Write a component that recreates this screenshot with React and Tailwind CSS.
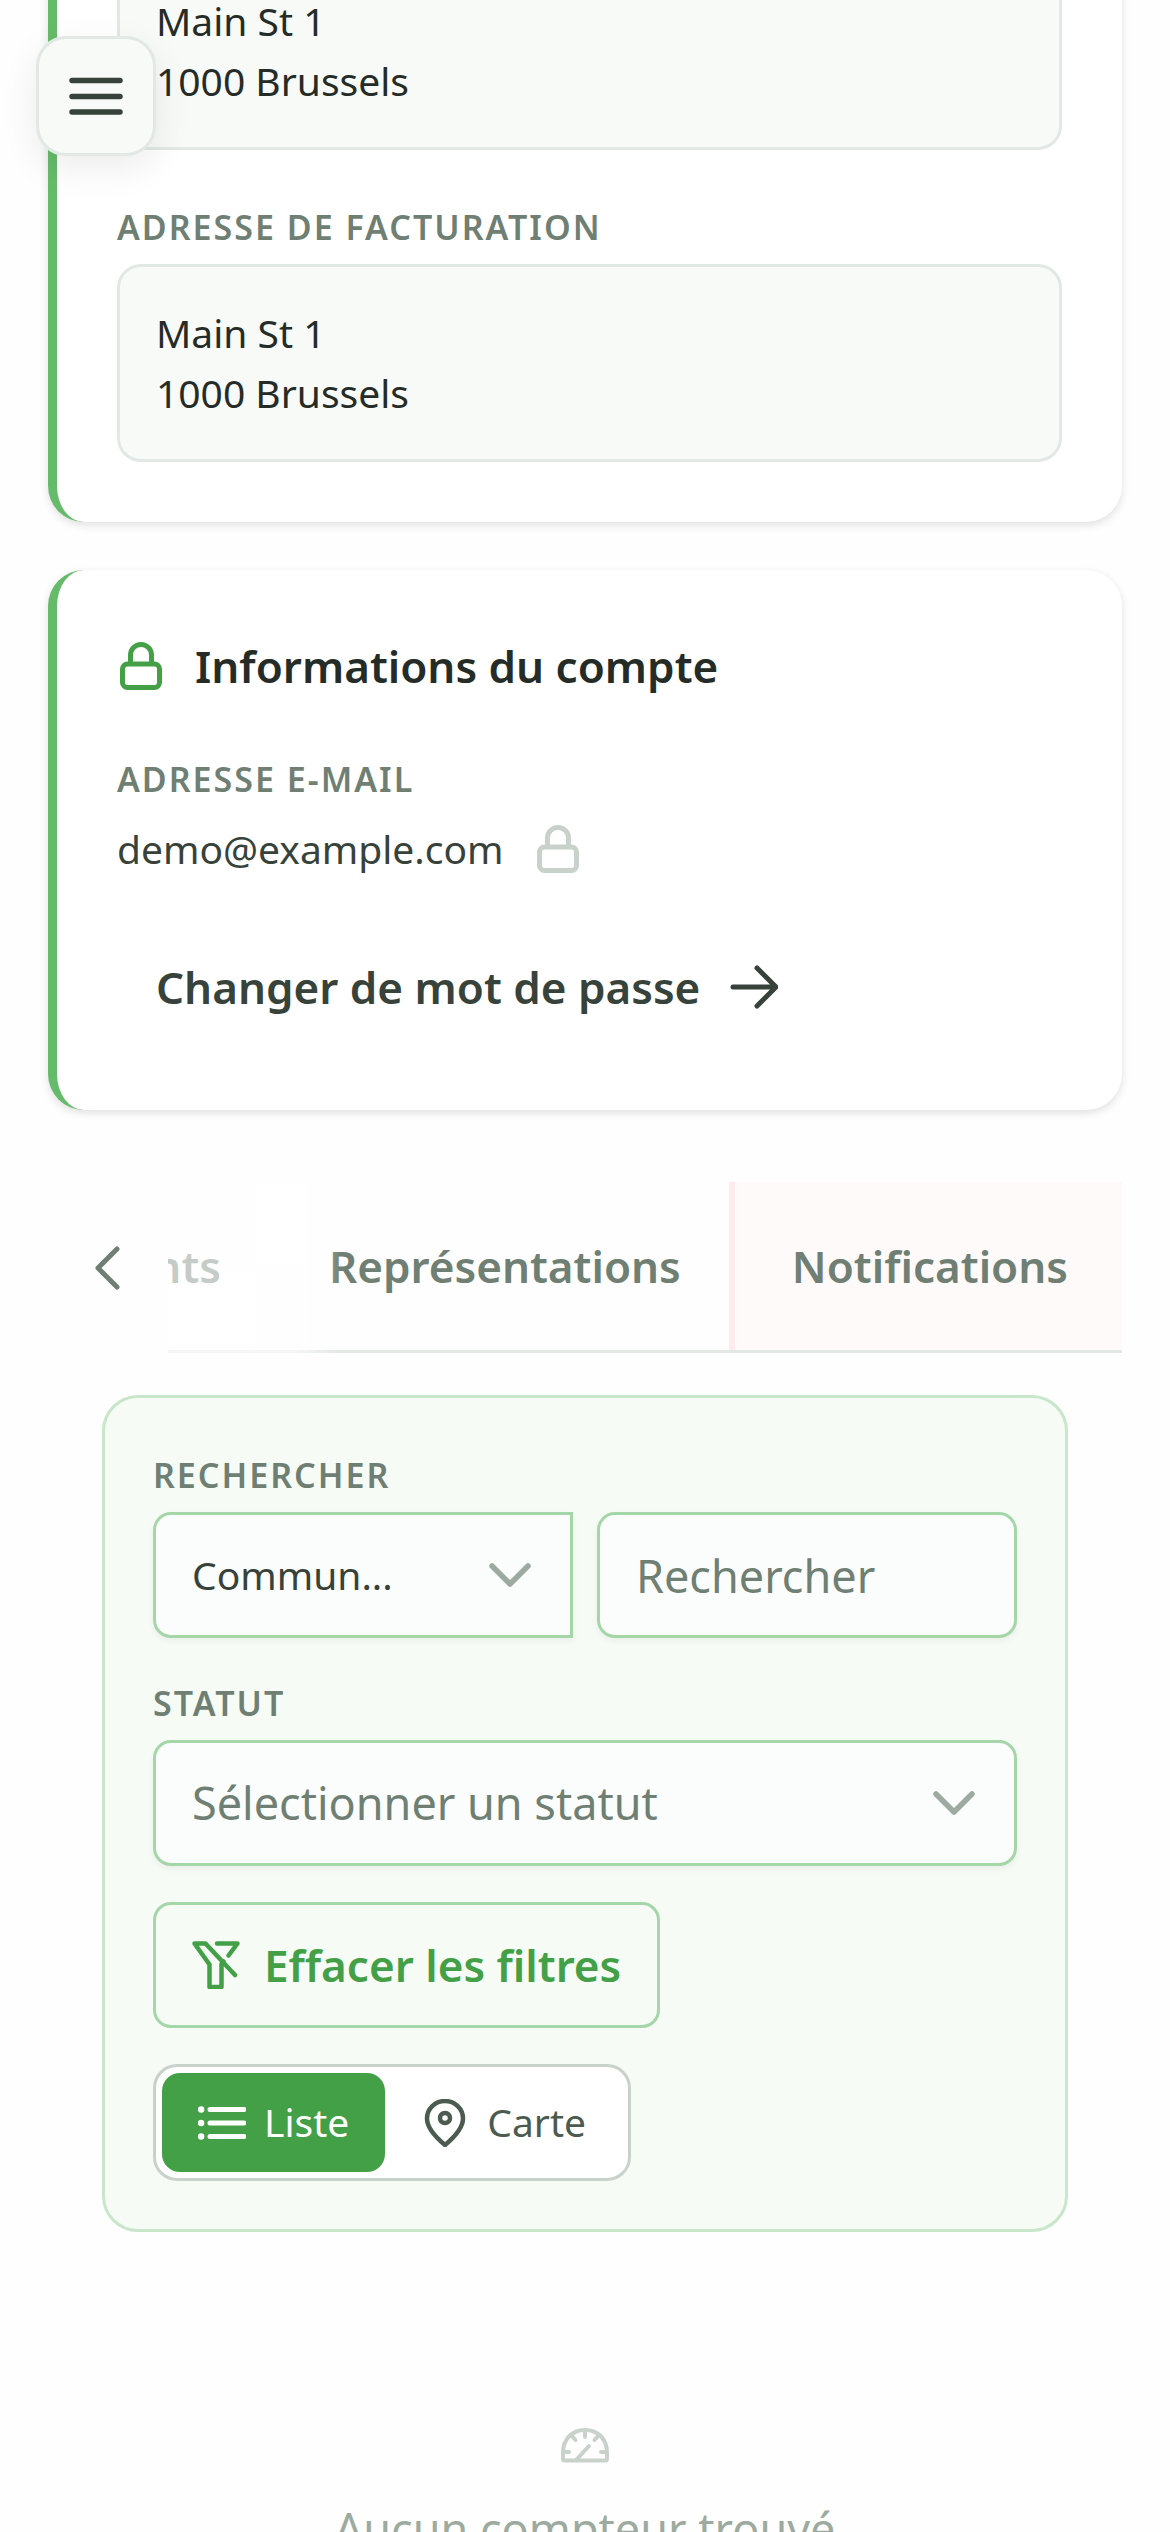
const LockIcon = ({ className }) => (
  <svg className={className} viewBox="0 0 48 48" fill="none" stroke="currentColor" strokeWidth="5" aria-hidden="true">
    <path d="M13.5 22V13a10.5 10.5 0 0 1 21 0v9" />
    <rect x="5.5" y="22" width="37" height="23.5" rx="5" />
  </svg>
);

const ArrowRightIcon = ({ className }) => (
  <svg className={className} viewBox="0 0 48 48" fill="none" stroke="currentColor" strokeWidth="5" strokeLinecap="round" strokeLinejoin="round" aria-hidden="true">
    <path d="M3 24H45M27 5L46 24L27 43" />
  </svg>
);

const ChevronDownIcon = ({ className }) => (
  <svg className={className} viewBox="0 0 48 48" fill="none" stroke="currentColor" strokeWidth="5.5" strokeLinecap="round" strokeLinejoin="round" aria-hidden="true">
    <path d="M6 15L24 33L42 15" />
  </svg>
);

const ChevronLeftIcon = ({ className }) => (
  <svg className={className} viewBox="0 0 48 48" fill="none" stroke="currentColor" strokeWidth="5" strokeLinecap="round" strokeLinejoin="round" aria-hidden="true">
    <path d="M33 5L14 24L33 43" />
  </svg>
);

const BarsIcon = ({ className }) => (
  <svg className={className} viewBox="0 0 54 54" fill="none" stroke="currentColor" strokeWidth="5.5" strokeLinecap="round" aria-hidden="true">
    <path d="M3 11.5H51M3 27.5H51M3 43H51" />
  </svg>
);

const FilterSlashIcon = ({ className }) => (
  <svg className={className} viewBox="0 0 48 48" fill="none" stroke="currentColor" strokeWidth="4.5" strokeLinecap="round" strokeLinejoin="round" aria-hidden="true">
    <path d="M25 2.5H45.5L36.5 14.5" />
    <path d="M43 34L13.5 2.5H2.500L17.5 23.5V46H29.500V23L31.500 20.5" />
  </svg>
);

const ListIcon = ({ className }) => (
  <svg className={className} viewBox="0 0 48 48" fill="none" stroke="currentColor" strokeLinecap="round" aria-hidden="true">
    <path d="M12 10.5H46M12 24H46M12 37.5H46" strokeWidth="5" />
    <path d="M3 10.5H3.1M3 24H3.1M3 37.5H3.1" strokeWidth="6.5" />
  </svg>
);

const PinIcon = ({ className }) => (
  <svg className={className} viewBox="0 0 48 48" fill="none" stroke="currentColor" strokeWidth="4.5" strokeLinejoin="round" aria-hidden="true">
    <path d="M24 46C18 41 6 30 6 19.5a18 17.5 0 0 1 36 0C42 30 30 41 24 46Z" />
    <circle cx="24" cy="19" r="5" />
  </svg>
);

const GaugeIcon = ({ className }) => (
  <svg className={className} viewBox="0 0 48 48" fill="none" stroke="currentColor" strokeWidth="4" strokeLinecap="round" strokeLinejoin="round" aria-hidden="true">
    <path d="M3.5 39.500C2.500 39.500 2 39 2 38V32C2 18 11 9 24 9s22 9 22 23v6c0 1-.5 1.500-1.500 1.500Z" />
    <path d="M24 10v6M10 14l4.500 5M38 14l-4.500 5M3 31h5M45 31h-5M16 38L28 25" />
  </svg>
);

const Label = ({ children, htmlFor }) => {
  const style =
    "block mb-2 text-[34px] leading-[58px] font-semibold tracking-[2px] uppercase text-[#6f7f73]";

  return htmlFor ? (
    <label htmlFor={htmlFor} className={style}>
      {children}
    </label>
  ) : (
    <h3 className={style}>{children}</h3>
  );
};

const Address = ({ street, city }) => (
  <address className="not-italic rounded-3xl border-3 border-[#e2e8e4] bg-[#f8faf8] p-9 text-[39px] leading-[60px] text-[#252c27]">
    <p>{street}</p>
    <p>{city}</p>
  </address>
);

const field =
  "w-full h-[126px] rounded-[18px] border-3 border-[#a5d6a7] bg-[#fbfdfc] px-9 shadow-[0_3px_6px_rgba(18,18,23,0.05)] outline-none";

const App = () => {
  return (
    <div className="h-screen overflow-hidden bg-[#fefefe] px-12 font-['Noto_Sans',sans-serif] text-[#252c27]">
      {/* Floating menu button */}
      <button
        type="button"
        aria-label="Menu"
        className="fixed top-9 left-9 z-10 flex size-30 items-center justify-center rounded-[30px] border-3 border-[#e2e8e4] bg-[#f8faf8] text-[#37423a] shadow-[0_12px_36px_rgba(0,0,0,0.08)]"
      >
        <BarsIcon className="size-[54px]" />
      </button>

      {/* Addresses, scrolled partly out of view */}
      <section className="-mt-12 rounded-b-[36px] border-l-9 border-[#66bb6a] bg-white px-15 pb-15 shadow-[0_3px_9px_rgba(0,0,0,0.12)]">
        <Address street="Main St 1" city="1000 Brussels" />
        <div className="mt-12">
          <Label>Adresse de facturation</Label>
          <Address street="Main St 1" city="1000 Brussels" />
        </div>
      </section>

      {/* Account */}
      <section className="mt-12 rounded-[36px] border-l-9 border-[#66bb6a] bg-white p-15 shadow-[0_3px_9px_rgba(0,0,0,0.12)]">
        <h2 className="mb-12 flex items-center gap-[30px] text-[44px] leading-[72px] font-semibold">
          <LockIcon className="size-12 text-[#43a047]" />
          Informations du compte
        </h2>
        <Label>Adresse e-mail</Label>
        <div className="flex h-[66px] items-center gap-[30px] text-[39px] text-[#37423a]">
          demo@example.com
          <LockIcon className="size-12 text-[#c8d2ca]" />
        </div>
        <button
          type="button"
          className="mt-[42px] flex h-[126px] items-center gap-[30px] px-[39px] text-[44px] font-semibold text-[#37423a]"
        >
          Changer de mot de passe
          <ArrowRightIcon className="size-12" />
        </button>
      </section>

      {/* Tabs */}
      <nav className="relative mt-18 flex h-[171px] text-[44px] font-semibold text-[#6f7f73]">
        <button type="button" aria-label="Précédent" className="flex w-30 shrink-0 items-center pl-9">
          <ChevronLeftIcon className="size-12" />
        </button>
        <div role="tablist" className="flex min-w-0 flex-1 justify-end overflow-hidden border-b-3 border-[#e2e8e4]">
          <button type="button" role="tab" className="shrink-0 px-[54px]">
            Documents
          </button>
          <button type="button" role="tab" className="shrink-0 pr-12 pl-[54px]">
            Représentations
          </button>
          <button type="button" role="tab" className="shrink-0 border-l-6 border-[#ffebee] bg-[#fffafa] pr-[54px] pl-[57px]">
            Notifications
          </button>
        </div>
        {/* Fade over the tabs that scroll under the arrow */}
        <div className="pointer-events-none absolute inset-y-0 left-30 w-[174px] bg-linear-to-r from-white/60 from-75% to-transparent" />
      </nav>

      {/* Filters */}
      <form className="mx-[54px] mt-[42px] rounded-[36px] border-3 border-[#c8e6c9] bg-[#f6fbf6] p-12">
        <Label htmlFor="search">Rechercher</Label>
        <div className="grid grid-cols-2 gap-6">
          <div className="relative">
            <select
              aria-label="Critère de recherche"
              className="h-[126px] w-full appearance-none rounded-l-[18px] border-3 border-[#a5d6a7] bg-[#fbfdfc] px-9 text-[39px] text-[#37423a] shadow-[0_3px_6px_rgba(18,18,23,0.05)] outline-none"
            >
              <option>Commun...</option>
            </select>
            <ChevronDownIcon className="pointer-events-none absolute inset-y-0 right-[39px] my-auto size-12 text-[#9caa9f]" />
          </div>
          <input
            id="search"
            type="text"
            placeholder="Rechercher"
            className={`${field} text-[45px] placeholder:text-[#6f7f73]`}
          />
        </div>

        <div className="mt-9">
          <Label htmlFor="status">Statut</Label>
          <div className="relative">
            <select id="status" className={`${field} appearance-none text-[45px] text-[#6f7f73]`}>
              <option>Sélectionner un statut</option>
            </select>
            <ChevronDownIcon className="pointer-events-none absolute inset-y-0 right-[39px] my-auto size-12 text-[#9caa9f]" />
          </div>
        </div>

        <button
          type="reset"
          className="mt-9 flex h-[126px] items-center gap-6 rounded-[18px] border-3 border-[#a5d6a7] px-9 text-[44px] font-semibold text-[#43a047]"
        >
          <FilterSlashIcon className="size-12" />
          Effacer les filtres
        </button>

        <div className="mt-9 flex w-fit rounded-3xl border-3 border-[#c8d2ca] bg-white p-[6px] text-[39px]">
          <button type="button" aria-pressed="true" className="flex h-[99px] items-center gap-[18px] rounded-[18px] bg-[#43a047] px-9 text-white">
            <ListIcon className="size-12" />
            Liste
          </button>
          <button type="button" aria-pressed="false" className="flex h-[99px] items-center gap-[18px] rounded-[18px] px-9 text-[#4b5b4f]">
            <PinIcon className="size-12" />
            Carte
          </button>
        </div>
      </form>

      {/* Empty state */}
      <div className="flex flex-col items-center gap-6 py-[189px] text-[45px] leading-[72px] text-[#9caa9f]">
        <GaugeIcon className="size-12 text-[#c8d2ca]" />
        <p>Aucun compteur trouvé</p>
      </div>
    </div>
  );
};

export default App;
